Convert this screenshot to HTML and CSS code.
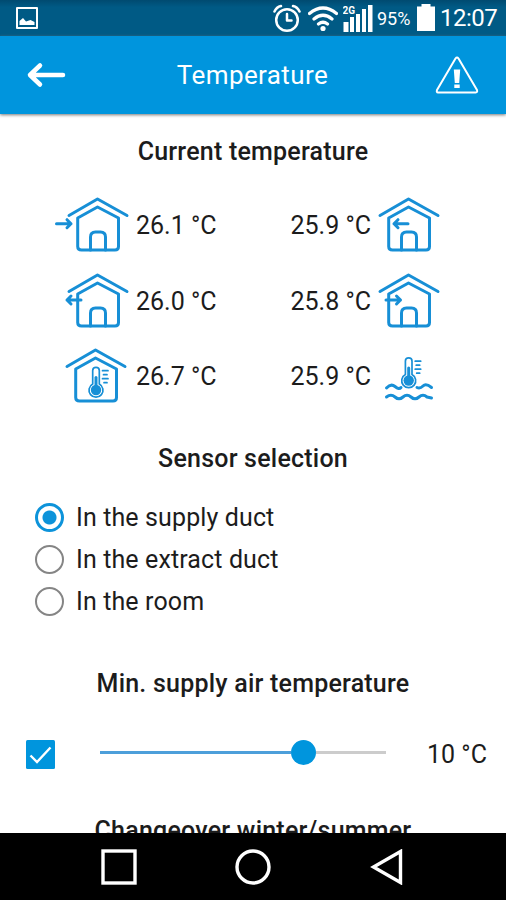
FILE: index.html
```
<!DOCTYPE html>
<html lang="en">
<head>
<meta charset="utf-8">
<title>Temperature</title>
<link rel="stylesheet" href="styles.css">
</head>

<body>

<svg class="defs" width="0" height="0">
<symbol id="house" viewBox="0 0 76 58" overflow="visible">
<path d="M15 19.5 L43.5 3 L73 19.5"/>
<path d="M23.7 22 L43.5 11 L64.5 22 V50.5 Q64.5 54 61 54 H27.5 Q23.7 54 23.7 50.5 Z"/>
</symbol>
<symbol id="door" viewBox="0 0 76 58">
<path d="M36.5 54 V41 Q36.5 36 41.5 36 H46.5 Q51.5 36 51.5 41 V54"/>
</symbol>
<symbol id="thermo" viewBox="0 0 26 34">
<path class="thin" d="M6.2 18.5 V5 Q6.2 1.8 9.5 1.8 Q12.8 1.8 12.8 5 V18.5 A7 7 0 1 1 6.2 18.5 Z"/>
<circle class="fill" cx="9.5" cy="24.5" r="5.2"/>
<path d="M9.5 24 V12"/>
<path class="thin" d="M16 5.2 H21.5 M17 9.2 H20.5 M16 13.2 H21.5 M17.5 17.2 H20.5"/>
</symbol>
</svg>

<div class="status">
<svg class="photo" width="22" height="22" viewBox="0 0 22 22"><rect x="1" y="1" width="20" height="20"/><path d="M3.5 18 V14 L7 11 L10 14.5 L14.5 13 L18.5 15 V18 Z"/></svg>
<svg class="alarm" width="30" height="30" viewBox="0 0 30 30"><circle cx="14" cy="17" r="10.8"/><path d="M14 11 V17.5 H18.5 M1.5 8.5 Q3.5 4 8 3 M26.5 8.5 Q24.5 4 20 3"/></svg>
<svg class="wifi" width="30" height="28" viewBox="0 0 30 28"><path d="M1.5 8.5 Q15 -2.5 28.5 8.5 M6 14 Q15 6.5 24 14 M10.5 19 Q15 15.5 19.5 19"/><circle cx="15" cy="23.5" r="2.6"/></svg>
<svg class="signal" width="30" height="28" viewBox="0 0 30 28"><text x="-.5" y="8.5" textLength="12.5">2G</text><path d="M.5 17 H5.5 V27 H.5 Z M7 12 H11 V27 H7 Z M13 9 H17 V27 H13 Z M19 4 H23 V27 H19 Z M25 0 H29.5 V27 H25 Z"/></svg>
<span class="percent">95%</span>
<svg class="battery" width="18" height="27" viewBox="0 0 18 27"><path d="M4.5 0 H13.5 V2.5 H18 V27 H0 V2.5 H4.5 Z"/></svg>
<span class="clock">12:07</span>
</div>

<div class="appbar">
<svg class="back" width="40" height="26" viewBox="0 0 40 26"><path d="M37 13 H4 M14 3.5 L4 13 L14 22.5"/></svg>
<h1>Temperature</h1>
<svg class="warn" width="44" height="40" viewBox="0 0 44 40"><path d="M20.5 3.5 Q22 1.5 23.5 3.5 L42 35 Q42.7 37.5 40.7 37.5 H3 Q1.3 37.5 2 35 Z"/><path class="mark" d="M18.8 14.5 H25.2 L24.2 28 H19.8 Z M19.3 29.5 H24.7 V33 H19.3 Z"/></svg>
</div>

<div class="content">
<h2>Current temperature</h2>
<div class="temps">
<svg class="icon" viewBox="0 0 76 58"><use href="#house"/><use href="#door"/><path d="M2.5 27.7 H17 M13 23.7 L17 27.7 L13 31.7"/></svg>
<span>26.1 °C</span>
<span class="right">25.9 °C</span>
<svg class="icon" viewBox="0 0 76 58"><use href="#house"/><use href="#door"/><path d="M43 27.7 H29 M33 23.7 L29 27.7 L33 31.7"/></svg>

<svg class="icon" viewBox="0 0 76 58"><use href="#house"/><use href="#door"/><path d="M27 28 H13 M17 24 L13 28 L17 32"/></svg>
<span>26.0 °C</span>
<span class="right">25.8 °C</span>
<svg class="icon" viewBox="0 0 76 58"><use href="#house"/><use href="#door"/><path d="M21 28 H35.5 M31.5 24 L35.5 28 L31.5 32"/></svg>

<svg class="icon" viewBox="2 0 76 58"><use href="#house"/><use href="#thermo" x="34.5" y="18.5" width="26" height="34"/></svg>
<span>26.7 °C</span>
<span class="right">25.9 °C</span>
<svg class="icon" viewBox="0 0 76 58"><use href="#thermo" x="34.2" y="9" width="26" height="34"/><path d="M21.5 41 Q26 36 30 39.5 T36 40.5 M52 40.5 Q55 42 58 39 T66.5 40.5 M21.5 50 Q26 46.5 30 50 T38 50 T46 50 T54 50 T62 50 L66.5 51"/></svg>
</div>

<h2 class="sensor">Sensor selection</h2>
<div class="radios">
<label><i class="radio on"></i><span>In the supply duct</span></label>
<label><i class="radio"></i><span>In the extract duct</span></label>
<label><i class="radio"></i><span>In the room</span></label>
</div>

<h2 class="minimum">Min. supply air temperature</h2>
<div class="setting">
<svg class="check" width="29" height="29" viewBox="0 0 29 29"><rect width="29" height="29" rx="1.5"/><path d="M4.5 15.5 L11 22 L24.5 7.5"/></svg>
<div class="slider"><div class="done"></div><div class="knob"></div><div class="rest"></div></div>
<span>10 °C</span>
</div>

<h2 class="season">Changeover winter/summer</h2>
</div>

<div class="navbar">
<svg width="36" height="36" viewBox="0 0 36 36"><rect x="2" y="2" width="32" height="32"/></svg>
<svg width="36" height="36" viewBox="0 0 36 36"><circle cx="18" cy="18" r="16"/></svg>
<svg width="36" height="36" viewBox="0 0 36 36"><path d="M31.5 2.5 V33.5 L4.5 18 Z"/></svg>
</div>

</body>
</html>
```
FILE: styles.css
```
body { margin: 0;
 width: 506px;
 height: 900px;
 overflow: hidden;
 display: flex;
 flex-direction: column;
 background: #fff;
 color: #1c1c1c;
 font-family: Roboto, "Liberation Sans", sans-serif;
 font-size: 25px;
}

svg {display: block; flex: none; fill: none; stroke-linecap: round; stroke-linejoin: round}
.defs {position: absolute}
h1, h2 {margin: 0; white-space: nowrap}

/* phone status bar */
.status {height: 36px; flex: none; display: flex; background: linear-gradient(#004a70, #005a85 20%); color: #fff}
.status svg {stroke: #fff; stroke-width: 2.5}
.status .photo {margin: 7px 235px 0 16px; stroke-width: 2}
.photo path {fill: #fff; stroke: none}
.status .alarm {margin-top: 3px}
.status .wifi {margin: 5px 0 0 5px; stroke-width: 3.2}
.wifi circle {fill: #fff; stroke: none}
.status .signal {margin: 5px 0 0 5px; fill: #fff; stroke: none}
.signal text {font-size: 10px; font-weight: bold}
.percent {width: 34px; margin: 0 6px 0 4px; font-size: 18px; line-height: 38px}
.status .battery {margin-top: 4px; fill: #fff; stroke: none}
.clock {margin-left: 5px; font-size: 24px; line-height: 37px; letter-spacing: -.5px}

.appbar {position: relative; height: 78px; flex: none; display: flex; align-items: center; background: #0095dd; box-shadow: 0 1px 3px #777; color: #fff}
.back {margin-left: 26px; stroke: #fff; stroke-width: 4.5}
.appbar h1 {flex: 1; text-align: center; font-size: 26px; font-weight: normal; letter-spacing: .4px; padding: 0 0 0 4px}
.warn {margin-right: 27px; stroke: #fff; stroke-width: 2}
.warn .mark {fill: #fff; stroke: none}

.content {flex: 1; min-height: 0; overflow: hidden}
h2 {font-size: 25px; line-height: 30px; font-weight: 500; letter-spacing: .22px; text-align: center}
.content h2:first-child {margin-top: 23px}

.temps {display: grid; grid-template-columns: 76px 107px 134px 76px; grid-auto-rows: 58px; row-gap: 17.5px; margin: 29px 0 0 54px; line-height: 59px}
.temps span {padding-left: 6px; white-space: nowrap}
.temps .right {padding: 0; text-align: right}
.icon {width: 76px; height: 58px; stroke: #178fd6; stroke-width: 3; overflow: visible}
.right + .icon {margin-left: -6px}
.thin {stroke-width: 1.7}
.fill {fill: #178fd6; stroke: none}

h2.sensor {margin-top: 39px}
.radios {margin: 22px 0 0 35px; letter-spacing: .12px}
.radios label {display: flex; align-items: center; height: 42px}
.radio {box-sizing: border-box; width: 29px; height: 29px; margin-right: 12px; border: 2.5px solid #858585; border-radius: 50%}
.radio.on {border: 3px solid #0d93da; background: radial-gradient(circle, #0d93da 6.5px, #fff 7.5px)}

h2.minimum {margin-top: 47px}
.setting {display: flex; align-items: center; height: 30px; margin: 40px 0 0 26px}
.check rect {fill: #0095dd}
.check path {stroke: #fff; stroke-width: 2.4; stroke-linecap: butt; stroke-linejoin: miter}
.slider {display: flex; align-items: center; width: 286px; margin: 0 41px 3px 45px}
.done {width: 191px; height: 3px; background: #4d9fda}
.knob {width: 25px; height: 25px; border-radius: 50%; background: #0095dd}
.rest {flex: 1; height: 3px; background: #ccc}
h2.season {margin-top: 47px}

.navbar {height: 67px; flex: none; display: flex; justify-content: center; align-items: center; gap: 98px; background: #000}
.navbar svg {stroke: #fff; stroke-width: 3.4; stroke-linejoin: miter}
```
